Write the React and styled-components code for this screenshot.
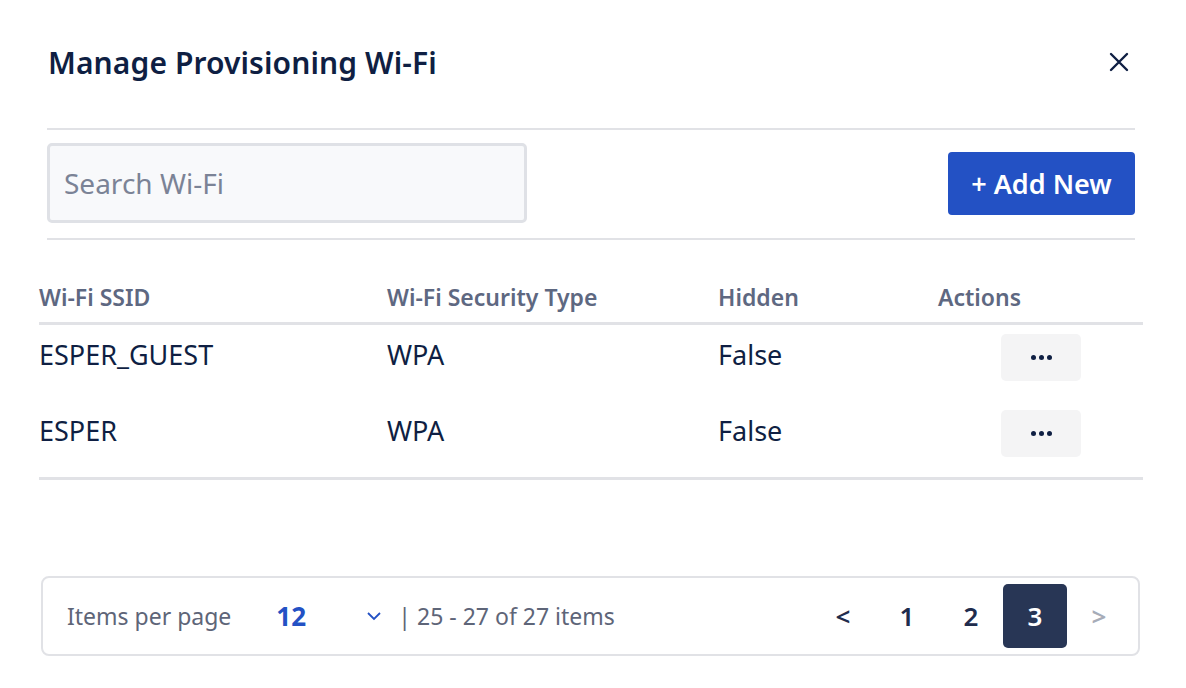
import React from "react";
import styled, { createGlobalStyle } from "styled-components";

const Global = createGlobalStyle`
  html, body { margin: 0; padding: 0; background: #fff; }
  body { font-family: "Noto Sans", "Open Sans", sans-serif; color: #0f1f43; }
  * { box-sizing: border-box; }
`;

const Modal = styled.div`
  width: 1186px;
  height: 688px;
  display: flex;
  flex-direction: column;
  padding: 0 43px 0 39px;
`;

const Header = styled.div`
  display: flex;
  align-items: center;
  justify-content: space-between;
  height: 130px;
  padding: 0 4px 4px 1px;
  margin: 0 8px;
  border-bottom: 2px solid #e1e2e6;
`;

const Title = styled.h1`
  margin: 0;
  font-size: 30px;
  font-weight: 600;
  color: #0f1f43;
  letter-spacing: 0.1px;
`;

const CloseButton = styled.button`
  border: none;
  background: none;
  padding: 0;
  width: 24px;
  height: 24px;
  display: flex;
  align-items: center;
  justify-content: center;
  cursor: pointer;
`;

const Toolbar = styled.div`
  display: flex;
  align-items: center;
  justify-content: space-between;
  margin: 0 8px;
  height: 110px;
  border-bottom: 2px solid #e1e2e6;
  padding-bottom: 2px;
`;

const Search = styled.input`
  width: 480px;
  height: 80px;
  border: 3px solid #dfe1e6;
  border-radius: 5px;
  background: #f8f9fb;
  padding: 0 14px;
  font-family: inherit;
  font-size: 28px;
  color: #0f1f43;
  outline: none;
  &::placeholder { color: #7b8396; }
`;

const PrimaryButton = styled.button`
  width: 187px;
  height: 63px;
  border: none;
  border-radius: 4px;
  background: #2351c4;
  color: #fff;
  font-family: inherit;
  font-size: 27px;
  font-weight: 600;
  cursor: pointer;
`;

const Table = styled.div`
  margin-top: 37px;
  display: flex;
  flex-direction: column;
`;

const grid = `
  display: grid;
  grid-template-columns: 348px 331px 220px 1fr;
`;

const HeadRow = styled.div`
  ${grid}
  align-items: center;
  height: 48px;
  padding-bottom: 6px;
  border-bottom: 3px solid #e1e2e6;
`;

const HeadCell = styled.div`
  font-size: 23px;
  font-weight: 600;
  color: #5e6881;
`;

const BodyRow = styled.div`
  ${grid}
  align-items: start;
  height: 76px;
  padding-top: 9px;
`;

const Body = styled.div`
  border-bottom: 3px solid #e1e2e6;
`;

const Cell = styled.div`
  font-size: 27px;
  line-height: 42px;
  color: #0f1f43;
`;

const ActionCell = styled.div`
  padding-left: 63px;
`;

const DotsButton = styled.button`
  width: 80px;
  height: 47px;
  border: none;
  border-radius: 5px;
  background: #f4f4f5;
  display: flex;
  align-items: center;
  justify-content: center;
  gap: 3px;
  cursor: pointer;
`;

const Dot = styled.span`
  width: 5px;
  height: 5px;
  border-radius: 50%;
  background: #0f1f43;
`;

const Pager = styled.div`
  margin: auto 3px 32px 2px;
  height: 80px;
  border: 2px solid #e1e2e6;
  border-radius: 8px;
  display: flex;
  align-items: center;
  justify-content: space-between;
  padding: 0 7px 0 24px;
`;

const PagerLeft = styled.div`
  display: flex;
  align-items: center;
  font-size: 23px;
  color: #5e6578;
`;

const PerPage = styled.span`
  margin-left: 45px;
  width: 90px;
  font-weight: 700;
  color: #2351c4;
  font-size: 26px;
`;

const Chevron = styled.span`
  display: flex;
  width: 32px;
  align-items: center;
`;

const Pages = styled.div`
  display: flex;
  align-items: center;
`;

const PageButton = styled.button`
  width: 64px;
  height: 64px;
  border: none;
  border-radius: 5px;
  background: ${p => (p.$active ? "#283655" : "transparent")};
  color: ${p => (p.$active ? "#fff" : p.$disabled ? "#a7acb8" : "#1f2c4d")};
  font-family: inherit;
  font-size: 26px;
  font-weight: 600;
  display: flex;
  align-items: center;
  justify-content: center;
  cursor: pointer;
`;

export default function App() {
  const rows = [
    { ssid: "ESPER_GUEST", type: "WPA", hidden: "False" },
    { ssid: "ESPER", type: "WPA", hidden: "False" },
  ];
  return (
    <>
      <Global />
      <Modal>
        <Header>
          <Title>Manage Provisioning Wi-Fi</Title>
          <CloseButton aria-label="Close">
            <svg width="20" height="20" viewBox="0 0 20 20">
              <path d="M2 2 L18 18 M18 2 L2 18" stroke="#0f1f43" strokeWidth="2.4" strokeLinecap="round" />
            </svg>
          </CloseButton>
        </Header>
        <Toolbar>
          <Search placeholder="Search Wi-Fi" />
          <PrimaryButton>+ Add New</PrimaryButton>
        </Toolbar>
        <Table>
          <HeadRow>
            <HeadCell>Wi-Fi SSID</HeadCell>
            <HeadCell>Wi-Fi Security Type</HeadCell>
            <HeadCell>Hidden</HeadCell>
            <HeadCell>Actions</HeadCell>
          </HeadRow>
          <Body>
            {rows.map(r => (
              <BodyRow key={r.ssid}>
                <Cell>{r.ssid}</Cell>
                <Cell>{r.type}</Cell>
                <Cell>{r.hidden}</Cell>
                <ActionCell>
                  <DotsButton aria-label="Actions">
                    <Dot /><Dot /><Dot />
                  </DotsButton>
                </ActionCell>
              </BodyRow>
            ))}
          </Body>
        </Table>
        <Pager>
          <PagerLeft>
            Items per page
            <PerPage>12</PerPage>
            <Chevron>
              <svg width="16" height="10" viewBox="0 0 16 10">
                <path d="M2 2 L8 8 L14 2" fill="none" stroke="#2351c4" strokeWidth="1.8" />
              </svg>
            </Chevron>
            | 25 - 27 of 27 items
          </PagerLeft>
          <Pages>
            <PageButton>&lt;</PageButton>
            <PageButton>1</PageButton>
            <PageButton>2</PageButton>
            <PageButton $active>3</PageButton>
            <PageButton $disabled>&gt;</PageButton>
          </Pages>
        </Pager>
      </Modal>
    </>
  );
}
